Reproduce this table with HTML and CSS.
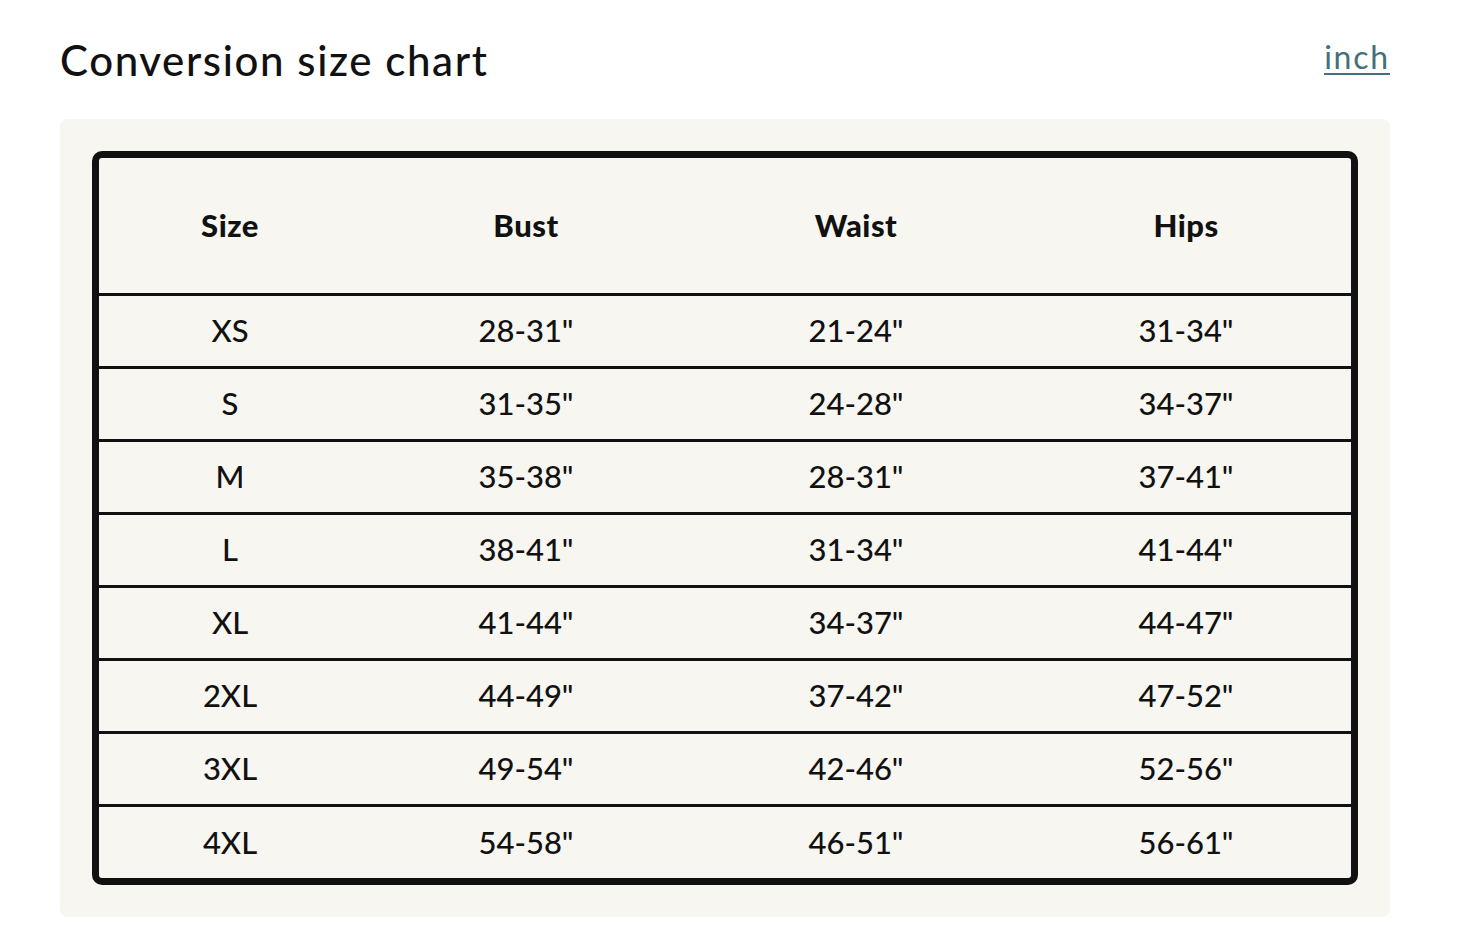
FILE: index.html
```html
<!DOCTYPE html>
<html lang="en">
<head>
<meta charset="utf-8">
<title>Conversion size chart</title>
<link rel="stylesheet" href="styles.css">
</head>
<body>
<section class="chart">
  <div class="chart-head">
    <h2 class="chart-title">Conversion size chart</h2>
    <a class="unit-link" href="#">inch</a>
  </div>
  <div class="panel">
    <table class="size-table">
      <colgroup>
        <col class="col-size">
        <col class="col-m">
        <col class="col-m">
        <col class="col-m">
      </colgroup>
      <thead>
        <tr><th>Size</th><th>Bust</th><th>Waist</th><th>Hips</th></tr>
      </thead>
      <tbody>
        <tr><td>XS</td><td>28-31"</td><td>21-24"</td><td>31-34"</td></tr>
        <tr><td>S</td><td>31-35"</td><td>24-28"</td><td>34-37"</td></tr>
        <tr><td>M</td><td>35-38"</td><td>28-31"</td><td>37-41"</td></tr>
        <tr><td>L</td><td>38-41"</td><td>31-34"</td><td>41-44"</td></tr>
        <tr><td>XL</td><td>41-44"</td><td>34-37"</td><td>44-47"</td></tr>
        <tr><td>2XL</td><td>44-49"</td><td>37-42"</td><td>47-52"</td></tr>
        <tr><td>3XL</td><td>49-54"</td><td>42-46"</td><td>52-56"</td></tr>
        <tr><td>4XL</td><td>54-58"</td><td>46-51"</td><td>56-61"</td></tr>
      </tbody>
    </table>
  </div>
</section>
</body>
</html>
```
FILE: styles.css
```css
html, body {
  margin: 0;
  padding: 0;
  background: #ffffff;
}
body {
  font-family: "Lato", "Open Sans", sans-serif;
  color: #111111;
}
.chart {
  width: 1330px;
  margin-left: 60px;
  padding-top: 28px;
}
.chart-head {
  display: flex;
  justify-content: space-between;
  align-items: flex-start;
  height: 91px;
}
.chart-title {
  margin: 0;
  font-size: 42px;
  font-weight: 500;
  line-height: 64px;
  letter-spacing: 1.6px;
}
.unit-link {
  display: block;
  margin-top: 9px;
  font-size: 32px;
  line-height: 40px;
  letter-spacing: 1.8px;
  color: #43707a;
  text-decoration: underline;
  text-decoration-thickness: 2px;
  text-underline-offset: 4px;
}
.panel {
  background: #f7f6f1;
  border-radius: 8px;
  padding: 32px;
}
.size-table {
  width: 100%;
  border-collapse: separate;
  border-spacing: 0;
  border: 7px solid #111111;
  border-radius: 10px;
  table-layout: fixed;
  font-size: 31px;
}
.col-size { width: 262px; }
.size-table th,
.size-table td {
  text-align: center;
  padding: 0 0 2px;
  border-bottom: 3px solid #111111;
}
.size-table th {
  height: 133px;
  font-weight: 900;
  letter-spacing: 0.5px;
}
.size-table td {
  height: 68px;
  font-weight: 500;
}
.size-table tbody tr:last-child td {
  border-bottom: 0;
  height: 69px;
}
```
